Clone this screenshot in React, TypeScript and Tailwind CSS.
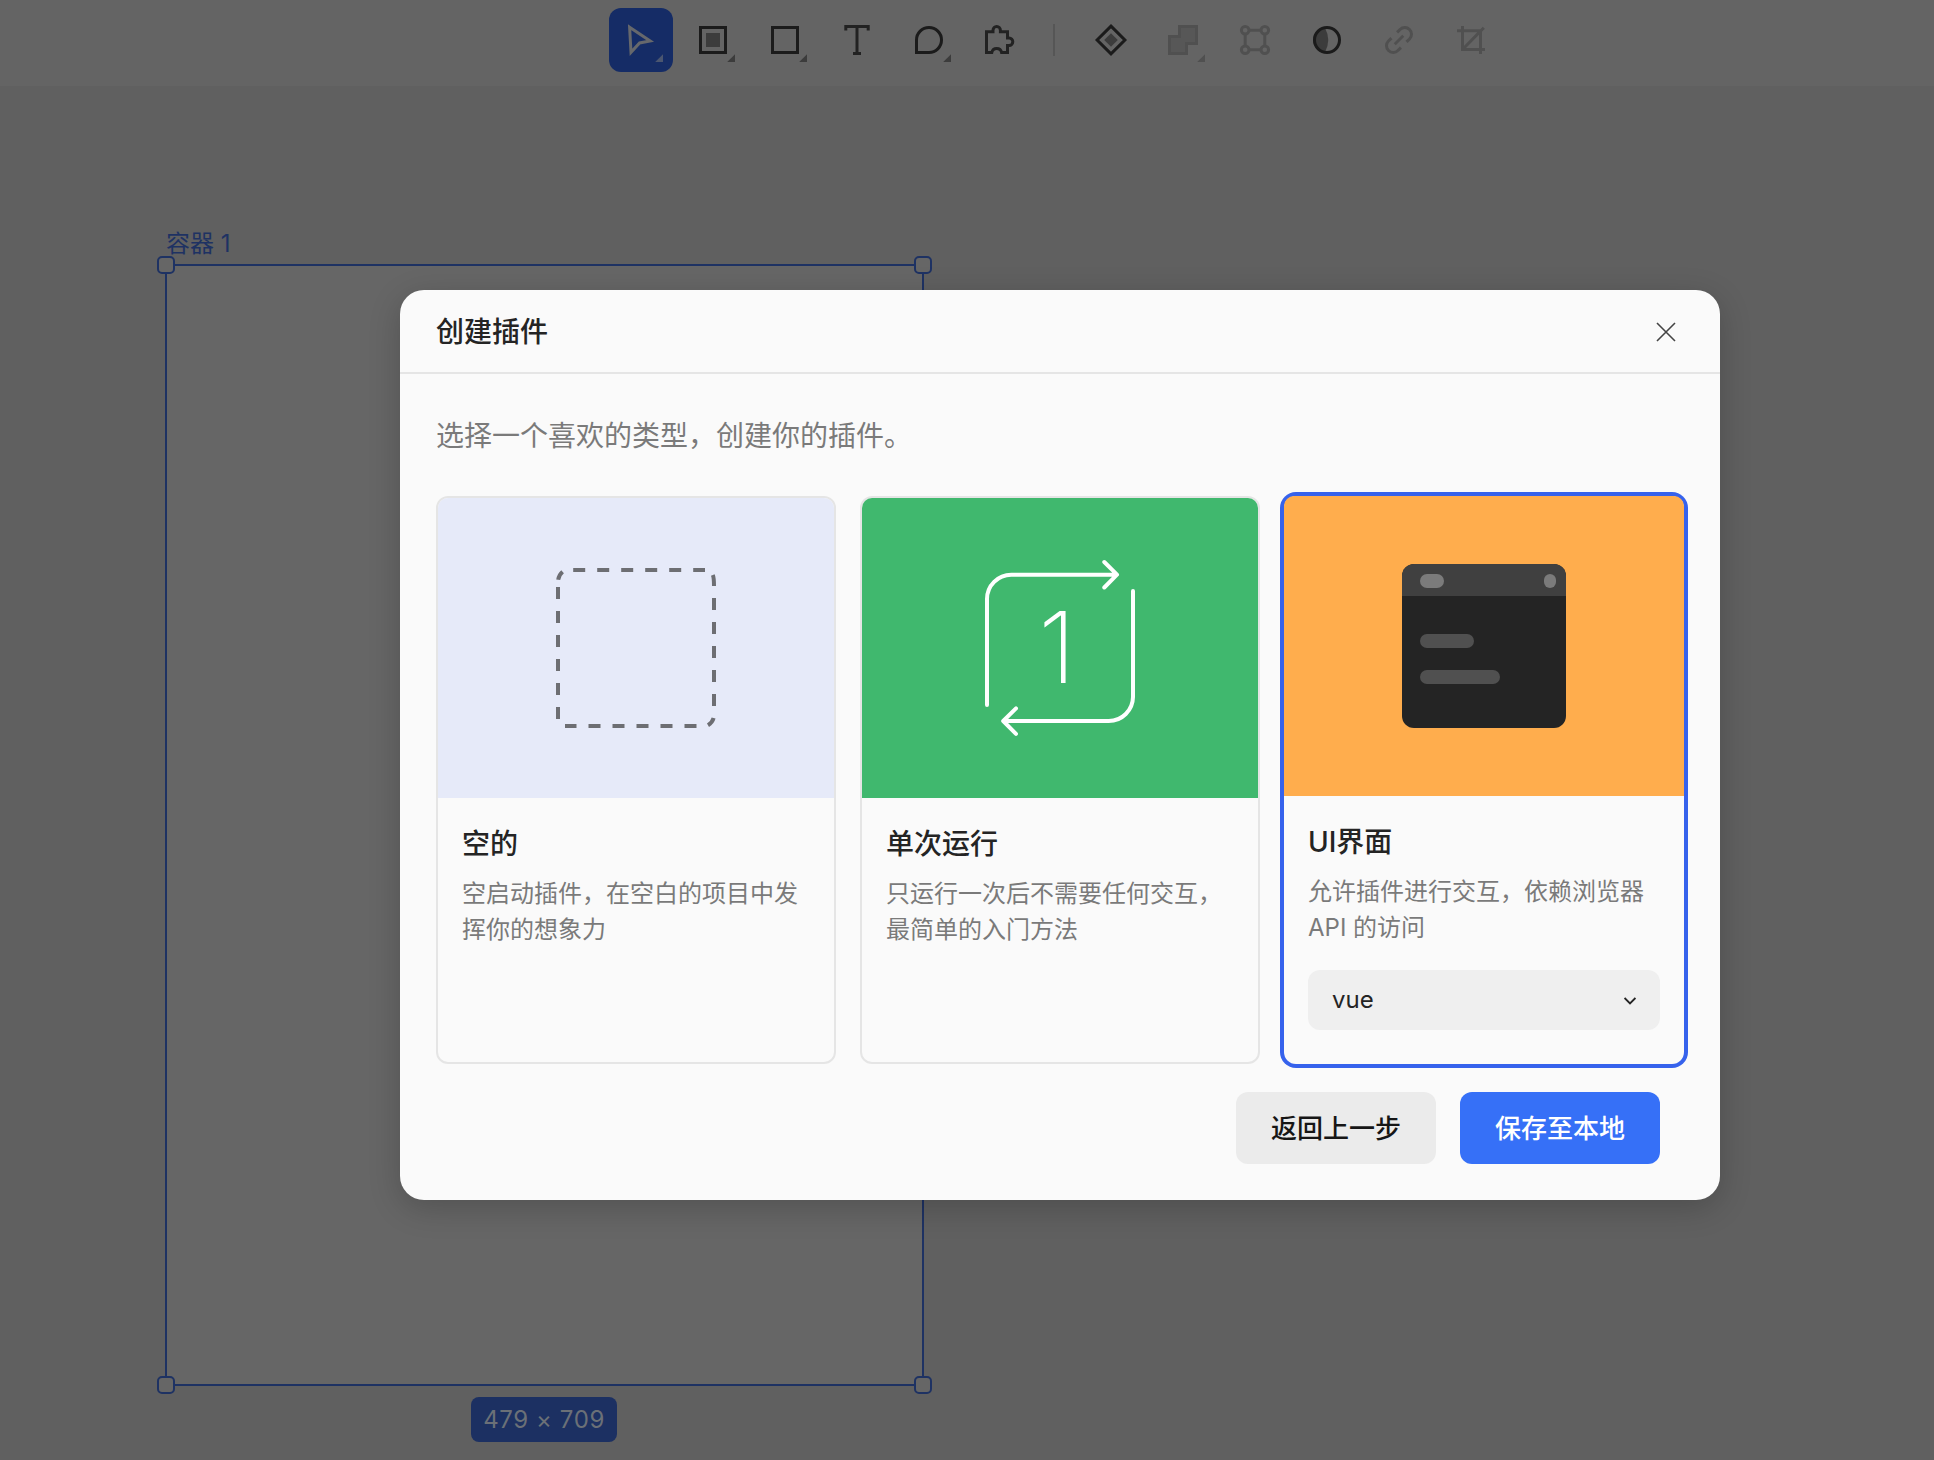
import type { ReactNode } from "react";

const DARK = "#1b1b1b";
const MID = "#3c3c3c";
const FAINT = "#505050";

function Tool({
  children,
  active = false,
  corner,
}: {
  children: ReactNode;
  active?: boolean;
  corner?: string;
}) {
  return (
    <button
      className={
        active
          ? "h-16 w-16 rounded-xl bg-[#152c66]"
          : "h-16 w-16 rounded-xl"
      }
    >
      <svg width="64" height="64" viewBox="0 0 64 64" fill="none" strokeWidth="3">
        {children}
        {corner && <path d="M54 46.2V54H46.2Z" fill={corner} />}
      </svg>
    </button>
  );
}

function Toolbar() {
  return (
    <header className="flex h-[86px] items-start gap-2 bg-[#646464] pl-[609px] pt-2">
      <Tool active corner="#4b5670">
        <path d="M20.6 19.2L41.2 33L30.6 35L22 44.3Z" stroke="#66686c" />
      </Tool>
      <Tool corner={MID}>
        <rect x="19.5" y="19.5" width="25" height="25" stroke={DARK} />
        <rect x="25" y="25" width="14" height="14" fill={MID} />
      </Tool>
      <Tool corner={MID}>
        <rect x="19.5" y="19.5" width="25" height="25" stroke={DARK} />
      </Tool>
      <Tool>
        <path d="M20.8 22.4V18.6H43.2V22.4M32 18.6V45.4M28 45.4H36" stroke="#222" />
      </Tool>
      <Tool corner={MID}>
        <path d="M19.5 44.5V32A12.5 12.5 0 1 1 32 44.5Z" stroke={DARK} />
      </Tool>
      <Tool>
        <path
          d="M17.5 23.8H24V22.2A3.7 3.7 0 0 1 31.4 22.2V23.8H38.5V30H40.1A3.7 3.7 0 0 1 40.1 37.4H38.5V44.5H32.6A5 5 0 0 0 22.8 44.5H17.5Z"
          stroke="#222"
        />
      </Tool>
      <div className="mr-4 ml-3 mt-4 h-8 w-0.5 bg-[#565656]" />
      <Tool>
        <path d="M32 18.1L45.9 32L32 45.9L18.1 32Z" stroke={DARK} />
        <path d="M32 25.2L38.8 32L32 38.8L25.2 32Z" fill={MID} />
      </Tool>
      <Tool corner={FAINT}>
        <path
          d="M28.5 18.5H45.5V35.5H35.5V45.5H18.5V28.5H28.5Z"
          fill="#575757"
          stroke={FAINT}
        />
      </Tool>
      <Tool>
        <g stroke={FAINT}>
          <circle cx="22.2" cy="22.2" r="3.8" />
          <circle cx="41.8" cy="22.2" r="3.8" />
          <circle cx="22.2" cy="41.8" r="3.8" />
          <circle cx="41.8" cy="41.8" r="3.8" />
          <path d="M26 22.2H38M26 41.8H38M22.2 26V38M41.8 26V38" />
        </g>
      </Tool>
      <Tool>
        <path d="M30 20Q36.5 32 30 44A12 12 0 0 1 30 20Z" fill={MID} />
        <circle cx="32" cy="32" r="12.5" stroke={DARK} />
      </Tool>
      <Tool>
        <g transform="translate(32 32) rotate(-45)" stroke={FAINT}>
          <path d="M-4 -6.7H-8.2A6.7 6.7 0 0 0 -8.2 6.7H-4" />
          <path d="M4 -6.7H8.2A6.7 6.7 0 0 1 8.2 6.7H4" />
          <path d="M-6 0H6" />
        </g>
      </Tool>
      <Tool>
        <path
          d="M23.5 18V41.5H46M18 22.7H41.5V46M23.5 41.5L44.8 19.8"
          stroke={FAINT}
        />
      </Tool>
    </header>
  );
}

function Handle({ place }: { place: string }) {
  return (
    <span
      className={`absolute h-[18px] w-[18px] rounded-[5px] border-2 border-[#1e3263] bg-[#666] ${place}`}
    />
  );
}

function Selection() {
  return (
    <div className="absolute left-[165px] top-[264px] h-[1122px] w-[759px] border-2 border-[#1e3263] bg-[#666]">
      <div className="absolute -top-10 -left-px text-[24px] leading-9 whitespace-nowrap text-[#1e3263]">
        容器 1
      </div>
      <Handle place="-left-[10px] -top-[10px]" />
      <Handle place="-right-[10px] -top-[10px]" />
      <Handle place="-left-[10px] -bottom-[10px]" />
      <Handle place="-right-[10px] -bottom-[10px]" />
      <div className="absolute left-[304px] top-[1131px] flex h-[45px] w-[146px] items-center justify-center rounded-lg bg-[#1c3062] text-[24px] tracking-[0.6px] whitespace-nowrap text-[#6b7077]">
        479 × 709
      </div>
    </div>
  );
}

function EmptyArt() {
  return (
    <svg width="160" height="160" viewBox="0 0 160 160" fill="none" stroke="#6d6e73" strokeWidth="4">
      <path d="M17.2 2H149" strokeDasharray="12 12" />
      <path d="M158 30V139" strokeDasharray="12 12" />
      <path d="M140.5 158H9" strokeDasharray="12 12" />
      <path d="M2 151V18" strokeDasharray="12 12" />
      <path d="M2.2 11.8Q2.8 7 6.6 3.8M156.8 7Q158 9.5 158 18M157.6 150Q156.4 154.6 152 157.2" />
    </svg>
  );
}

function OnceArt() {
  return (
    <div className="relative flex h-[180px] w-[180px] items-center justify-center">
      <svg
        className="absolute inset-0"
        width="180"
        height="180"
        viewBox="0 0 180 180"
        fill="none"
        stroke="#fff"
        strokeWidth="4"
        strokeLinecap="round"
        strokeLinejoin="round"
      >
        <path d="M17 147V41A24.3 24.3 0 0 1 41.3 16.7H146.5M134.3 4L147 16.7L134.3 29.5" />
        <path d="M163 33V139A24.3 24.3 0 0 1 138.7 163H33.5M46 150.4L33.2 163L46 175.8" />
      </svg>
      <span className="mr-1.5 mb-0.5 text-[99px] leading-none font-extralight text-white">1</span>
    </div>
  );
}

function WindowArt() {
  return (
    <div className="flex h-[164px] w-[164px] flex-col overflow-hidden rounded-xl bg-[#242424]">
      <div className="flex h-8 items-start justify-between bg-[#404040] pt-2.5 pr-2.5 pl-[18px]">
        <span className="h-3.5 w-6 rounded-full bg-[#7b7b7b]" />
        <span className="h-3.5 w-3 rounded-full bg-[#7b7b7b]" />
      </div>
      <span className="mt-[38px] ml-[18px] h-3.5 w-[54px] rounded-full bg-[#505050]" />
      <span className="mt-[22px] ml-[18px] h-3.5 w-20 rounded-full bg-[#505050]" />
    </div>
  );
}

function Card({
  frame,
  tint,
  art,
  title,
  lines,
  children,
}: {
  frame: string;
  tint: string;
  art: ReactNode;
  title: string;
  lines: [string, string];
  children?: ReactNode;
}) {
  return (
    <section className={`flex h-[568px] w-[400px] flex-col rounded-xl ${frame}`}>
      <div className={`flex h-[300px] shrink-0 items-center justify-center rounded-t-[10px] ${tint}`}>
        {art}
      </div>
      <div className="flex flex-col px-6 pt-[25px]">
        <h2 className="text-[28px] leading-[42px] font-medium text-[#242424]">{title}</h2>
        <p className="mt-[11px] text-[24px] leading-9 whitespace-nowrap text-[#7a7a7a]">
          {lines[0]}
          <br />
          {lines[1]}
        </p>
        {children}
      </div>
    </section>
  );
}

function Dialog() {
  return (
    <div className="absolute left-[400px] top-[290px] flex h-[910px] w-[1320px] flex-col rounded-3xl bg-[#fafafa] shadow-[0_8px_32px_rgba(0,0,0,0.2)]">
      <div className="flex h-[84px] items-center justify-between border-b-2 border-[#e5e5e5] pt-0.5 pr-[44px] pl-9">
        <h1 className="text-[28px] leading-[42px] font-medium text-[#242424]">创建插件</h1>
        <svg width="20" height="20" viewBox="0 0 20 20" stroke="#444" strokeWidth="1.6">
          <path d="M1 1L19 19M19 1L1 19" />
        </svg>
      </div>
      <p className="mt-[41px] px-9 text-[28px] leading-[42px] text-[#7a7a7a]">
        选择一个喜欢的类型，创建你的插件。
      </p>
      <div className="mt-[39px] flex gap-6 px-9">
        <Card
          frame="border-2 border-[#e5e5e5]"
          tint="bg-[#e6eaf9]"
          art={<EmptyArt />}
          title="空的"
          lines={["空启动插件，在空白的项目中发", "挥你的想象力"]}
        />
        <Card
          frame="border-2 border-[#e5e5e5]"
          tint="bg-[#40b86e]"
          art={<OnceArt />}
          title="单次运行"
          lines={["只运行一次后不需要任何交互，", "最简单的入门方法"]}
        />
        <Card
          frame="ring-4 ring-[#3662ec]"
          tint="bg-[#ffad4d]"
          art={<WindowArt />}
          title="UI界面"
          lines={["允许插件进行交互，依赖浏览器", "API 的访问"]}
        >
          <div className="mt-6 flex h-[60px] items-center justify-between rounded-xl bg-[#efefef] px-6 text-[24px] text-[#242424]">
            <span>vue</span>
            <svg
              className="mt-0.5"
              width="12"
              height="8"
              viewBox="0 0 12 8"
              fill="none"
              stroke="#242424"
              strokeWidth="1.8"
            >
              <path d="M0.6 1L6 6.4L11.4 1" />
            </svg>
          </div>
        </Card>
      </div>
      <div className="mt-7 flex justify-end gap-6 pr-[60px] text-[26px] font-medium">
        <button className="h-[72px] w-[200px] rounded-xl bg-[#ebebeb] text-[#161616]">
          返回上一步
        </button>
        <button className="h-[72px] w-[200px] rounded-xl bg-[#3670f7] text-white">
          保存至本地
        </button>
      </div>
    </div>
  );
}

export default function App() {
  return (
    <div className="relative h-[1460px] w-[1934px] overflow-hidden bg-[#606060] font-['Inter','Noto_Sans_CJK_SC',sans-serif]">
      <Toolbar />
      <Selection />
      <Dialog />
    </div>
  );
}
